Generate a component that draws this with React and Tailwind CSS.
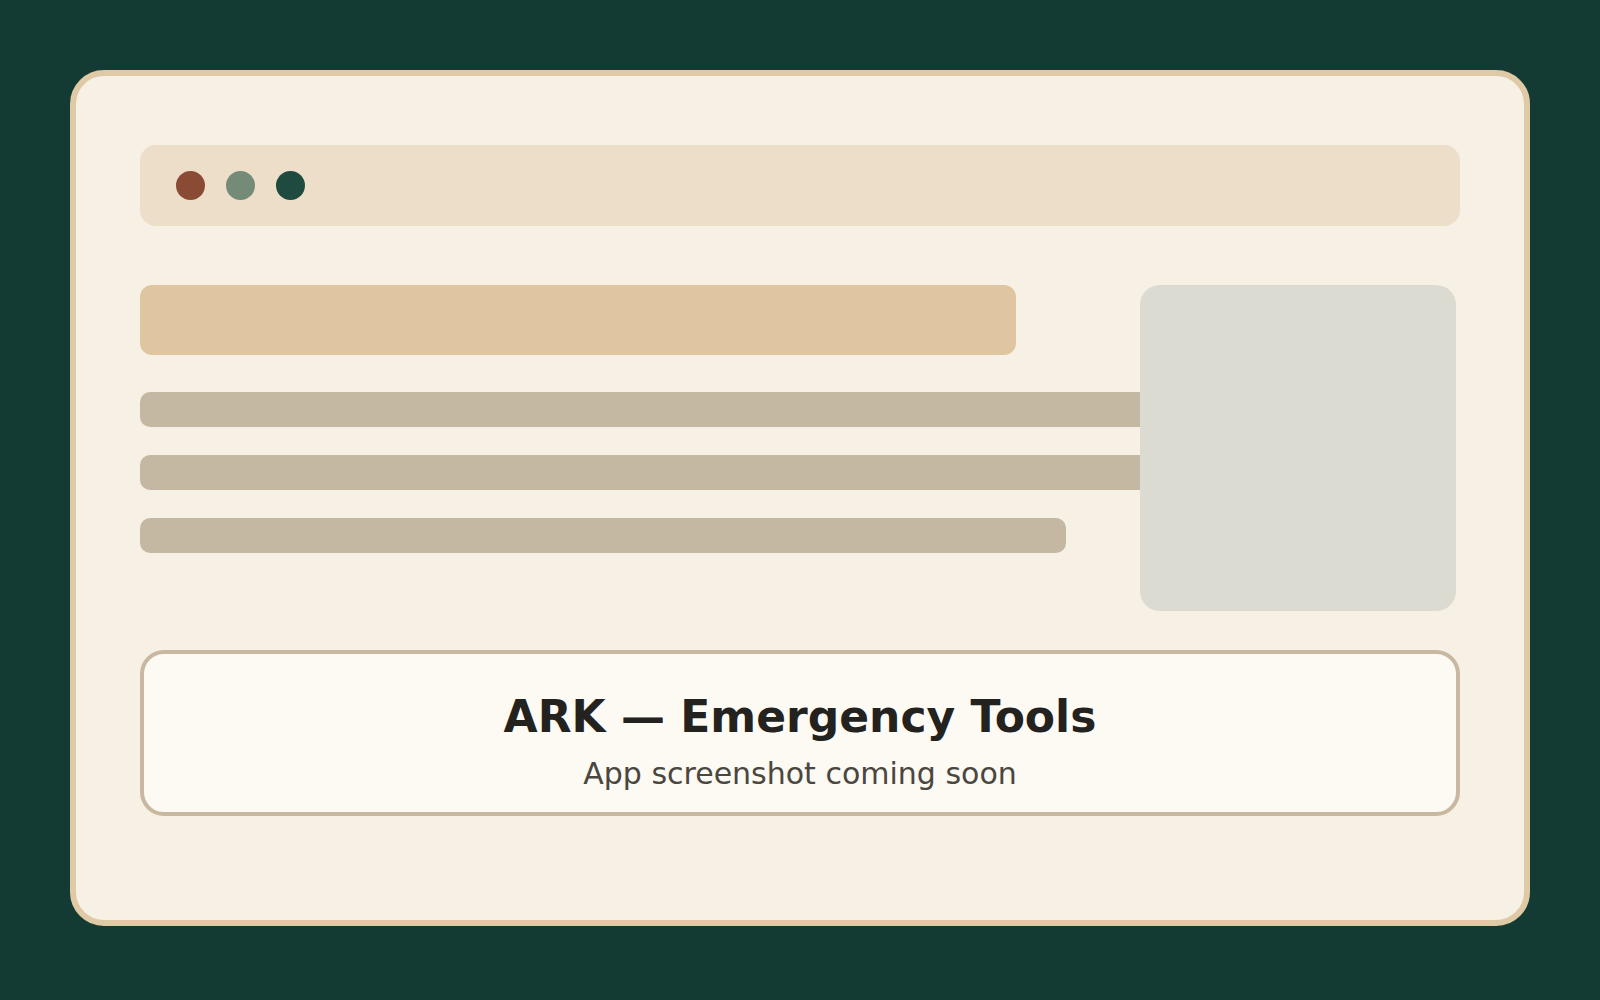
export default function App() {
  return (
    <div className="min-h-screen w-full bg-[#143b33] px-[70px] pt-[70px] pb-[74px] font-['DejaVu_Sans',sans-serif]">
      <div className="h-[856px] rounded-[34px] border-[6px] border-[#e0caa5] bg-[#f7f0e5] px-[64px] pt-[69px]">
        {/* fake window title bar */}
        <div className="flex h-[81px] items-center gap-[21px] rounded-2xl bg-[#ecdec8] pl-[36px]">
          <span className="h-[29px] w-[29px] rounded-full bg-[#8a4b34]" />
          <span className="h-[29px] w-[29px] rounded-full bg-[#748b77]" />
          <span className="h-[29px] w-[29px] rounded-full bg-[#1f4a3f]" />
        </div>

        {/* placeholder content */}
        <div className="relative mt-[59px] h-[326px]">
          <div className="h-[70px] w-[876px] rounded-xl bg-[#dfc6a1]" />
          <div className="mt-[37px] flex flex-col gap-[28px]">
            <div className="h-[35px] w-[1100px] rounded-[10px] bg-[#c5b8a2]" />
            <div className="h-[35px] w-[1100px] rounded-[10px] bg-[#c5b8a2]" />
            <div className="h-[35px] w-[926px] rounded-[10px] bg-[#c5b8a2]" />
          </div>
          <div className="absolute top-0 right-[4px] h-[326px] w-[316px] rounded-[20px] bg-[#dbdbd2]" />
        </div>

        {/* caption */}
        <div className="mt-[39px] h-[166px] rounded-3xl border-4 border-[#c8b89f] bg-[#fcfaf3] pt-[37px] text-center">
          <h1 className="text-[44px] font-bold leading-[51px] text-[#23221e]">ARK — Emergency Tools</h1>
          <p className="mt-[14px] text-[30px] leading-[35px] text-[#4a4640]">App screenshot coming soon</p>
        </div>
      </div>
    </div>
  )
}
